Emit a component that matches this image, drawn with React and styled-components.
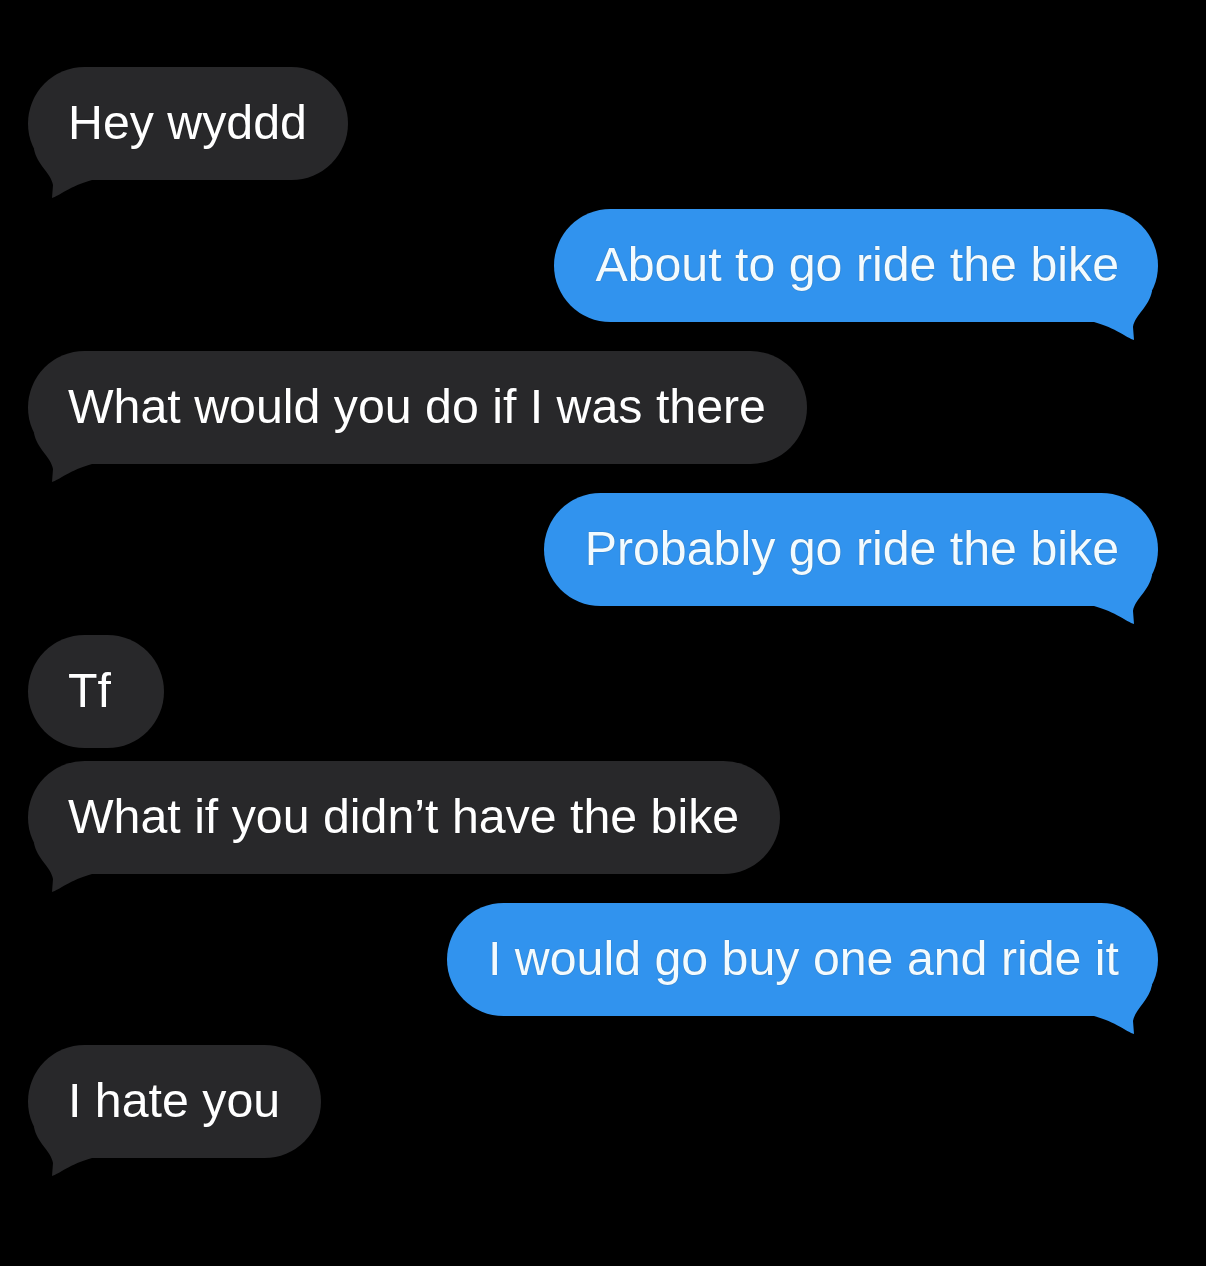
import React from "react";
import styled, { createGlobalStyle } from "styled-components";

const GlobalStyle = createGlobalStyle`
  html, body {
    margin: 0;
    padding: 0;
    background: #000;
  }
  body {
    font-family: "Liberation Sans", Arial, sans-serif;
  }
`;

const Screen = styled.div`
  width: 1206px;
  height: 1266px;
  background: #000;
  box-sizing: border-box;
  padding: 67px 48px 0 28px;
  display: flex;
  flex-direction: column;
  overflow: hidden;
`;

const Row = styled.div`
  display: flex;
  justify-content: ${(p) => (p.$out ? "flex-end" : "flex-start")};
  margin-top: ${(p) => p.$gap}px;
`;

const Bubble = styled.div`
  position: relative;
  height: 113px;
  min-width: ${(p) => (p.$wide ? "136px" : "56px")};
  box-sizing: border-box;
  padding: ${(p) => (p.$out ? "0 39px 0 41px" : "0 41px 0 40px")};
  border-radius: 56.5px;
  display: flex;
  align-items: center;
  background: ${(p) => (p.$out ? "#3193ee" : "#28282a")};
  color: ${(p) => (p.$out ? "#f2fbff" : "#ffffff")};
  font-size: 48.3px;
  white-space: nowrap;
  text-shadow: 0 0 1px rgba(0, 0, 0, 0.45);
`;

const Text = styled.span`
  position: relative;
  z-index: 1;
  line-height: 1;
  transform: translateY(-1px);
`;

const TailSvg = styled.svg`
  position: absolute;
  bottom: -19px;
  ${(p) => (p.$out ? "right: 0; transform: scaleX(-1);" : "left: 0;")}
  width: 70px;
  height: 50px;
  overflow: visible;
`;

const Tail = ({ out, color }) => (
  <TailSvg $out={out} viewBox="0 0 70 50" aria-hidden="true">
    <path
      d="M6 0 C9 16 23 24 25 36 L24 49 C31 47 42 37 64 31 L64 0 Z"
      fill={color}
    />
  </TailSvg>
);

const messages = [
  { text: "Hey wyddd", out: false, tail: true, gap: 0 },
  { text: "About to go ride the bike", out: true, tail: true, gap: 29 },
  { text: "What would you do if I was there", out: false, tail: true, gap: 29 },
  { text: "Probably go ride the bike", out: true, tail: true, gap: 29 },
  { text: "Tf", out: false, tail: false, gap: 29, wide: true },
  { text: "What if you didn’t have the bike", out: false, tail: true, gap: 13 },
  { text: "I would go buy one and ride it", out: true, tail: true, gap: 29 },
  { text: "I hate you", out: false, tail: true, gap: 29 },
];

export default function App() {
  return (
    <>
      <GlobalStyle />
      <Screen>
        {messages.map((m, i) => (
          <Row key={i} $out={m.out} $gap={m.gap}>
            <Bubble $out={m.out} $wide={m.wide}>
              {m.tail && (
                <Tail out={m.out} color={m.out ? "#3193ee" : "#28282a"} />
              )}
              <Text>{m.text}</Text>
            </Bubble>
          </Row>
        ))}
      </Screen>
    </>
  );
}
